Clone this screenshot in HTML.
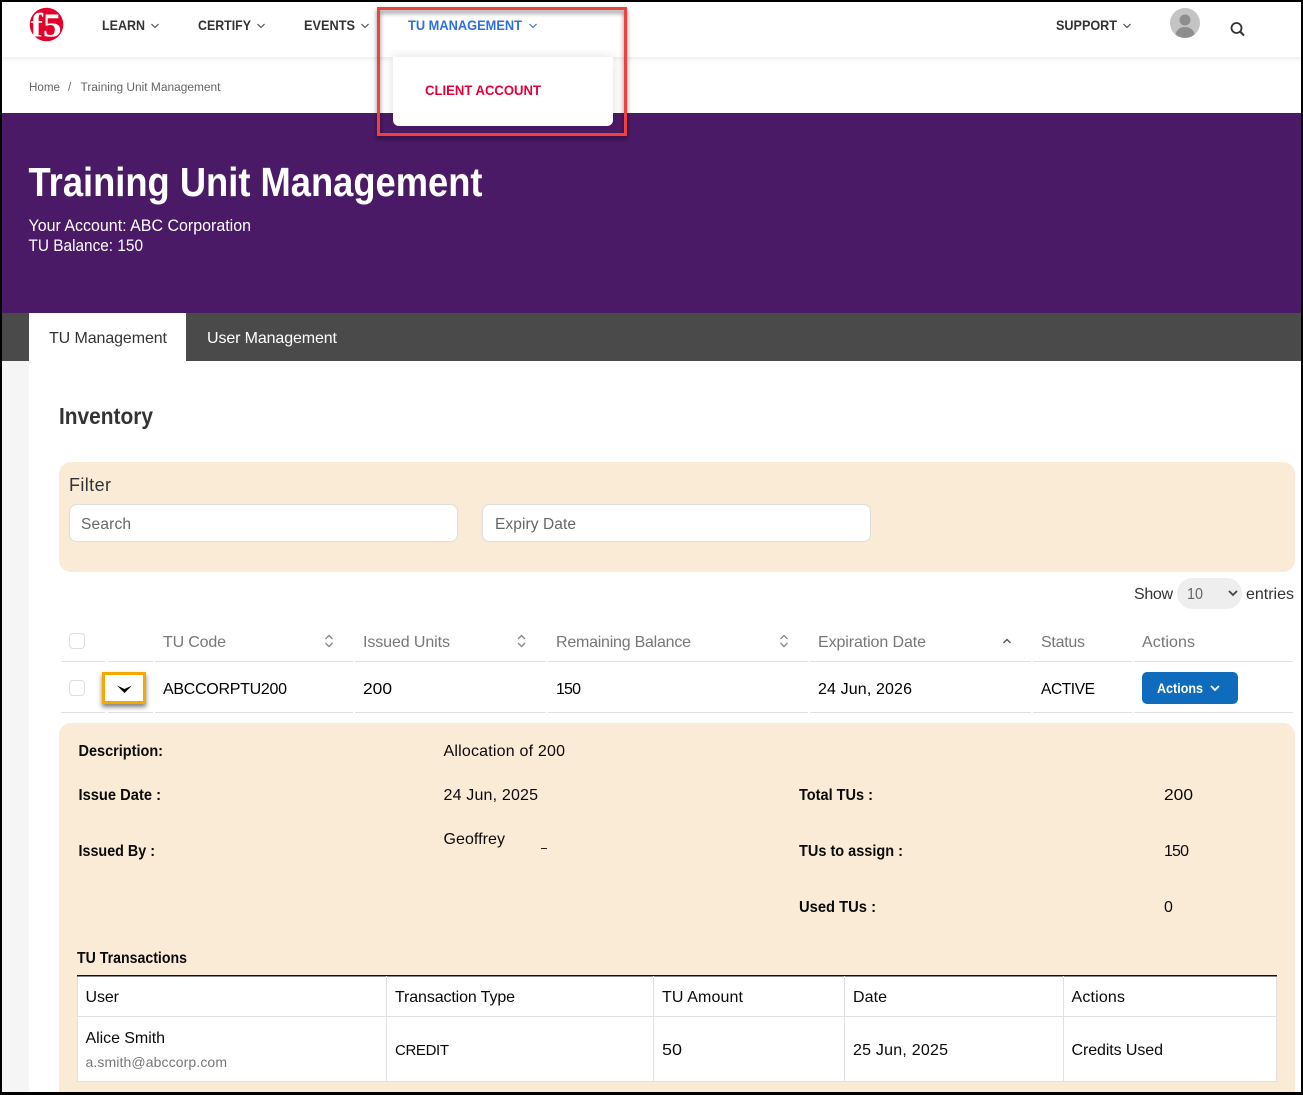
<!DOCTYPE html>
<html lang="en">
<head>
<meta charset="utf-8">
<title>Training Unit Management</title>
<style>
html,body{margin:0;padding:0;background:#fff;width:1303px;height:1095px;overflow:hidden}
svg{display:block}
text{font-family:"Liberation Sans",Arial,sans-serif;white-space:pre}
.nav{font-size:14px;font-weight:700;fill:#333}
.th{font-size:16px;fill:#777}
.td{font-size:16px;fill:#000}
.b{font-size:15.5px;font-weight:700;fill:#0a0a0a}
.v{font-size:16px;fill:#0a0a0a}
.ch{fill:none;stroke:#444;stroke-width:1.1}
.sort{fill:none;stroke:#888;stroke-width:1.4}
.ln{fill:#dfdfe4}
</style>
</head>
<body>
<svg width="1303" height="1095" viewBox="0 0 1303 1095" xmlns="http://www.w3.org/2000/svg">
<defs>
<filter id="s" x="-10%" y="-10%" width="120%" height="125%"><feDropShadow dx="0" dy="3" stdDeviation="2.500" flood-color="#000" flood-opacity=".5"/></filter>
<filter id="o" x="-30%" y="-30%" width="160%" height="180%"><feDropShadow dx="0" dy="3" stdDeviation="2.500" flood-color="#000" flood-opacity=".5"/></filter>
<filter id="n" x="-2%" y="-10%" width="104%" height="130%"><feDropShadow dx="0" dy="1" stdDeviation="3" flood-color="#000" flood-opacity=".1"/></filter>
<filter id="d" x="-10%" y="-10%" width="120%" height="130%"><feDropShadow dx="0" dy="0" stdDeviation="6" flood-color="#000" flood-opacity=".12"/></filter>
</defs>
<rect width="1303" height="1095" fill="#fff"/>
<!-- left gutter -->
<rect x="0" y="361" width="29" height="734" fill="#f5f5f5"/>
<!-- breadcrumb -->
<text x="29" y="91" font-size="11.5" fill="#666" textLength="31" lengthAdjust="spacingAndGlyphs">Home</text>
<text x="68" y="91" font-size="11.5" fill="#666">/</text>
<text x="80.500" y="91" font-size="11.5" fill="#666" textLength="140" lengthAdjust="spacingAndGlyphs">Training Unit Management</text>
<!-- nav -->
<rect x="0" y="0" width="1303" height="57" fill="#fff" filter="url(#n)"/>
<circle cx="46.500" cy="24.500" r="16.800" fill="#e4002b"/>
<text x="30.500" y="36.500" font-size="34" font-weight="700" fill="#fff" style="font-family:'Liberation Serif',serif" textLength="31" lengthAdjust="spacingAndGlyphs">f5</text>
<text class="nav" x="102" y="30" textLength="43" lengthAdjust="spacingAndGlyphs">LEARN</text>
<path class="ch" d="M151.500 24l3.500 3.500 3.500-3.500"/>
<text class="nav" x="198" y="30" textLength="53" lengthAdjust="spacingAndGlyphs">CERTIFY</text>
<path class="ch" d="M257.500 24l3.500 3.500 3.500-3.500"/>
<text class="nav" x="304" y="30" textLength="51" lengthAdjust="spacingAndGlyphs">EVENTS</text>
<path class="ch" d="M361.500 24l3.500 3.500 3.500-3.500"/>
<text class="nav" x="408" y="30" textLength="114" lengthAdjust="spacingAndGlyphs" style="fill:#2f6fdb">TU MANAGEMENT</text>
<path class="ch" style="stroke:#2f6fdb" d="M529.500 24l3.500 3.500 3.500-3.500"/>
<text class="nav" x="1056" y="30" textLength="61" lengthAdjust="spacingAndGlyphs">SUPPORT</text>
<path class="ch" d="M1123.500 24l3.500 3.500 3.500-3.500"/>
<circle cx="1185" cy="23" r="15" fill="#c4c4c4"/>
<circle cx="1185" cy="20" r="5.500" fill="#8e8e8e"/>
<path d="M1175.500 34.500c1-5.500 5-7.500 9.500-7.500s8.500 2 9.500 7.500a15 15 0 0 1-19 0z" fill="#8e8e8e"/>
<circle cx="1236.500" cy="28" r="5" fill="none" stroke="#333" stroke-width="1.800"/>
<path d="M1240 31.500l4 4" stroke="#333" stroke-width="2" fill="none"/>
<!-- hero -->
<rect x="0" y="113" width="1303" height="200" fill="#4b1a66"/>
<text x="28.500" y="196" font-size="41" font-weight="700" fill="#fff" textLength="454" lengthAdjust="spacingAndGlyphs">Training Unit Management</text>
<text x="28.500" y="231" font-size="16.500" fill="#fff" textLength="222.500" lengthAdjust="spacingAndGlyphs">Your Account: ABC Corporation</text>
<text x="28.500" y="251" font-size="16.500" fill="#fff" textLength="114.500" lengthAdjust="spacingAndGlyphs">TU Balance: 150</text>
<!-- tabs -->
<rect x="0" y="313" width="1303" height="48" fill="#4a4a4a"/>
<rect x="29" y="313" width="157" height="48" fill="#fff"/>
<text x="49" y="343" font-size="16" fill="#333" textLength="118" lengthAdjust="spacing">TU Management</text>
<text x="207" y="343" font-size="16" fill="#fff" textLength="130" lengthAdjust="spacing">User Management</text>
<!-- inventory -->
<text x="59" y="424" font-size="23" font-weight="700" fill="#333" textLength="94" lengthAdjust="spacingAndGlyphs">Inventory</text>
<!-- filter -->
<rect x="59" y="462" width="1236" height="110" rx="12" fill="#faebd7"/>
<text x="69" y="491" font-size="18" fill="#333" textLength="42" lengthAdjust="spacing">Filter</text>
<rect x="69.500" y="504.500" width="388" height="37" rx="7" fill="#fff" stroke="#ddd"/>
<text x="81" y="529" font-size="15.500" fill="#666" textLength="50" lengthAdjust="spacing">Search</text>
<rect x="482.500" y="504.500" width="388" height="37" rx="7" fill="#fff" stroke="#ddd"/>
<text x="495" y="529" font-size="15.500" fill="#666" textLength="81" lengthAdjust="spacing">Expiry Date</text>
<!-- show entries -->
<text x="1134" y="599" font-size="16" fill="#333" textLength="39" lengthAdjust="spacing">Show</text>
<rect x="1177" y="578" width="65" height="31" rx="15.500" fill="#eee"/>
<text x="1187" y="599" font-size="16" fill="#666" textLength="16" lengthAdjust="spacingAndGlyphs">10</text>
<path d="M1229 591l4 4 4-4" fill="none" stroke="#444" stroke-width="1.800"/>
<text x="1246" y="599" font-size="16" fill="#333" textLength="48" lengthAdjust="spacing">entries</text>
<!-- table header -->
<rect x="69.500" y="633.500" width="15" height="15" rx="3.500" fill="#fff" stroke="#ddd"/>
<text class="th" x="163" y="647" textLength="63" lengthAdjust="spacing">TU Code</text>
<path class="sort" d="M325.500 639l3.500-3.500 3.500 3.500M325.500 643l3.500 3.500 3.500-3.500"/>
<text class="th" x="363" y="647" textLength="87" lengthAdjust="spacing">Issued Units</text>
<path class="sort" d="M518 639l3.500-3.500 3.500 3.500M518 643l3.500 3.500 3.500-3.500"/>
<text class="th" x="556" y="647" textLength="135" lengthAdjust="spacing">Remaining Balance</text>
<path class="sort" d="M780.500 639l3.500-3.500 3.500 3.500M780.500 643l3.500 3.500 3.500-3.500"/>
<text class="th" x="818" y="647" textLength="108" lengthAdjust="spacing">Expiration Date</text>
<path class="sort" style="stroke:#555" d="M1003.500 643l3.500-3.500 3.500 3.500"/>
<text class="th" x="1041" y="647" textLength="44" lengthAdjust="spacing">Status</text>
<text class="th" x="1142" y="647" textLength="53" lengthAdjust="spacing">Actions</text>
<g class="ln">
<rect x="61" y="661" width="44" height="1"/><rect x="108" y="661" width="45" height="1"/><rect x="155" y="661" width="198" height="1"/><rect x="355" y="661" width="191" height="1"/><rect x="548" y="661" width="260" height="1"/><rect x="810" y="661" width="221" height="1"/><rect x="1033" y="661" width="99" height="1"/><rect x="1134" y="661" width="159" height="1"/>
<rect x="61" y="712" width="44" height="1"/><rect x="108" y="712" width="45" height="1"/><rect x="155" y="712" width="198" height="1"/><rect x="355" y="712" width="191" height="1"/><rect x="548" y="712" width="260" height="1"/><rect x="810" y="712" width="221" height="1"/><rect x="1033" y="712" width="99" height="1"/><rect x="1134" y="712" width="159" height="1"/>
</g>
<!-- table row -->
<rect x="69.500" y="680.500" width="15" height="15" rx="3.500" fill="#fff" stroke="#ddd"/>
<rect x="103.500" y="673.500" width="41" height="29" fill="#fff" stroke="#f5a800" stroke-width="3" filter="url(#o)"/>
<path d="M117 685.500l7.500 3.500 7.500-3.500-7.500 7.500z" fill="#000"/>
<text class="td" x="163" y="694" textLength="124" lengthAdjust="spacing">ABCCORPTU200</text>
<text class="td" x="363" y="694" textLength="29" lengthAdjust="spacingAndGlyphs">200</text>
<text class="td" x="556" y="694" textLength="25" lengthAdjust="spacing">150</text>
<text class="td" x="818" y="694" textLength="94" lengthAdjust="spacing">24 Jun, 2026</text>
<text class="td" x="1041" y="694" font-size="15.500" style="font-size:15.500px" textLength="54" lengthAdjust="spacing">ACTIVE</text>
<rect x="1142" y="672" width="96" height="32" rx="5" fill="#0f6cbd"/>
<text x="1157" y="693" font-size="14" font-weight="700" fill="#fff" textLength="46" lengthAdjust="spacingAndGlyphs">Actions</text>
<path d="M1211 686l4 4 4-4" fill="none" stroke="#fff" stroke-width="1.800"/>
<!-- details -->
<path d="M59 1095V735a12 12 0 0 1 12-12H1283a12 12 0 0 1 12 12V1095z" fill="#faebd7"/>
<text class="b" x="78.500" y="756" textLength="84.500" lengthAdjust="spacingAndGlyphs">Description:</text>
<text class="v" x="443.500" y="756" textLength="121.500" lengthAdjust="spacing">Allocation of 200</text>
<text class="b" x="78.500" y="800" textLength="82.500" lengthAdjust="spacingAndGlyphs">Issue Date :</text>
<text class="v" x="443.500" y="800" textLength="94.500" lengthAdjust="spacing">24 Jun, 2025</text>
<text class="b" x="799" y="800" textLength="74" lengthAdjust="spacingAndGlyphs">Total TUs :</text>
<text class="v" x="1164" y="800" textLength="29" lengthAdjust="spacingAndGlyphs">200</text>
<text class="b" x="78.500" y="856" textLength="76.500" lengthAdjust="spacingAndGlyphs">Issued By :</text>
<text class="v" x="443.500" y="844" textLength="61.500" lengthAdjust="spacing">Geoffrey</text>
<rect x="541" y="848" width="6" height="1" fill="#222"/>
<text class="b" x="799" y="856" textLength="104" lengthAdjust="spacingAndGlyphs">TUs to assign :</text>
<text class="v" x="1164" y="856" textLength="25" lengthAdjust="spacing">150</text>
<text class="b" x="799" y="912" textLength="77" lengthAdjust="spacingAndGlyphs">Used TUs :</text>
<text class="v" x="1164" y="912" font-size="16">0</text>
<text x="77" y="963" font-size="16" font-weight="700" fill="#0a0a0a" textLength="110" lengthAdjust="spacingAndGlyphs">TU Transactions</text>
<!-- transactions -->
<rect x="77.500" y="975.500" width="1199" height="106" fill="#fff" stroke="#dfdfe4"/>
<rect x="77" y="975" width="1200" height="1.500" fill="#111"/>
<g class="ln">
<rect x="78" y="1016" width="1198" height="1"/>
<rect x="386" y="976" width="1" height="105"/><rect x="653" y="976" width="1" height="105"/><rect x="844" y="976" width="1" height="105"/><rect x="1063" y="976" width="1" height="105"/>
</g>
<text class="v" x="85.500" y="1002" textLength="33.500" lengthAdjust="spacing">User</text>
<text class="v" x="395" y="1002" textLength="120" lengthAdjust="spacing">Transaction Type</text>
<text class="v" x="662" y="1002" textLength="81" lengthAdjust="spacing">TU Amount</text>
<text class="v" x="853" y="1002" textLength="34" lengthAdjust="spacing">Date</text>
<text class="v" x="1071.500" y="1002" textLength="53.500" lengthAdjust="spacing">Actions</text>
<text class="v" x="85.500" y="1043" textLength="79.500" lengthAdjust="spacing">Alice Smith</text>
<text x="85.500" y="1067" font-size="14" fill="#777" textLength="141.500" lengthAdjust="spacing">a.smith@abccorp.com</text>
<text class="v" x="395" y="1055" style="font-size:15px" textLength="54" lengthAdjust="spacing">CREDIT</text>
<text class="v" x="662" y="1055" textLength="20" lengthAdjust="spacingAndGlyphs">50</text>
<text class="v" x="853" y="1055" textLength="95" lengthAdjust="spacing">25 Jun, 2025</text>
<text class="v" x="1071.500" y="1055" textLength="91.500" lengthAdjust="spacing">Credits Used</text>
<!-- dropdown -->
<path d="M393 57H613V120a6 6 0 0 1-6 6H399a6 6 0 0 1-6-6z" fill="#fff" filter="url(#d)"/>
<text x="425" y="95" font-size="14" font-weight="700" fill="#e4003a" textLength="116" lengthAdjust="spacingAndGlyphs">CLIENT ACCOUNT</text>
<!-- callout -->
<rect x="378.500" y="8.500" width="247" height="126" fill="none" stroke="#f04040" stroke-width="3" filter="url(#s)"/>
<!-- frame -->
<rect x="1" y="1" width="1301" height="1092.500" fill="none" stroke="#000" stroke-width="2"/>
<rect x="0" y="1092" width="1303" height="3" fill="#000"/>
</svg>
</body>
</html>
